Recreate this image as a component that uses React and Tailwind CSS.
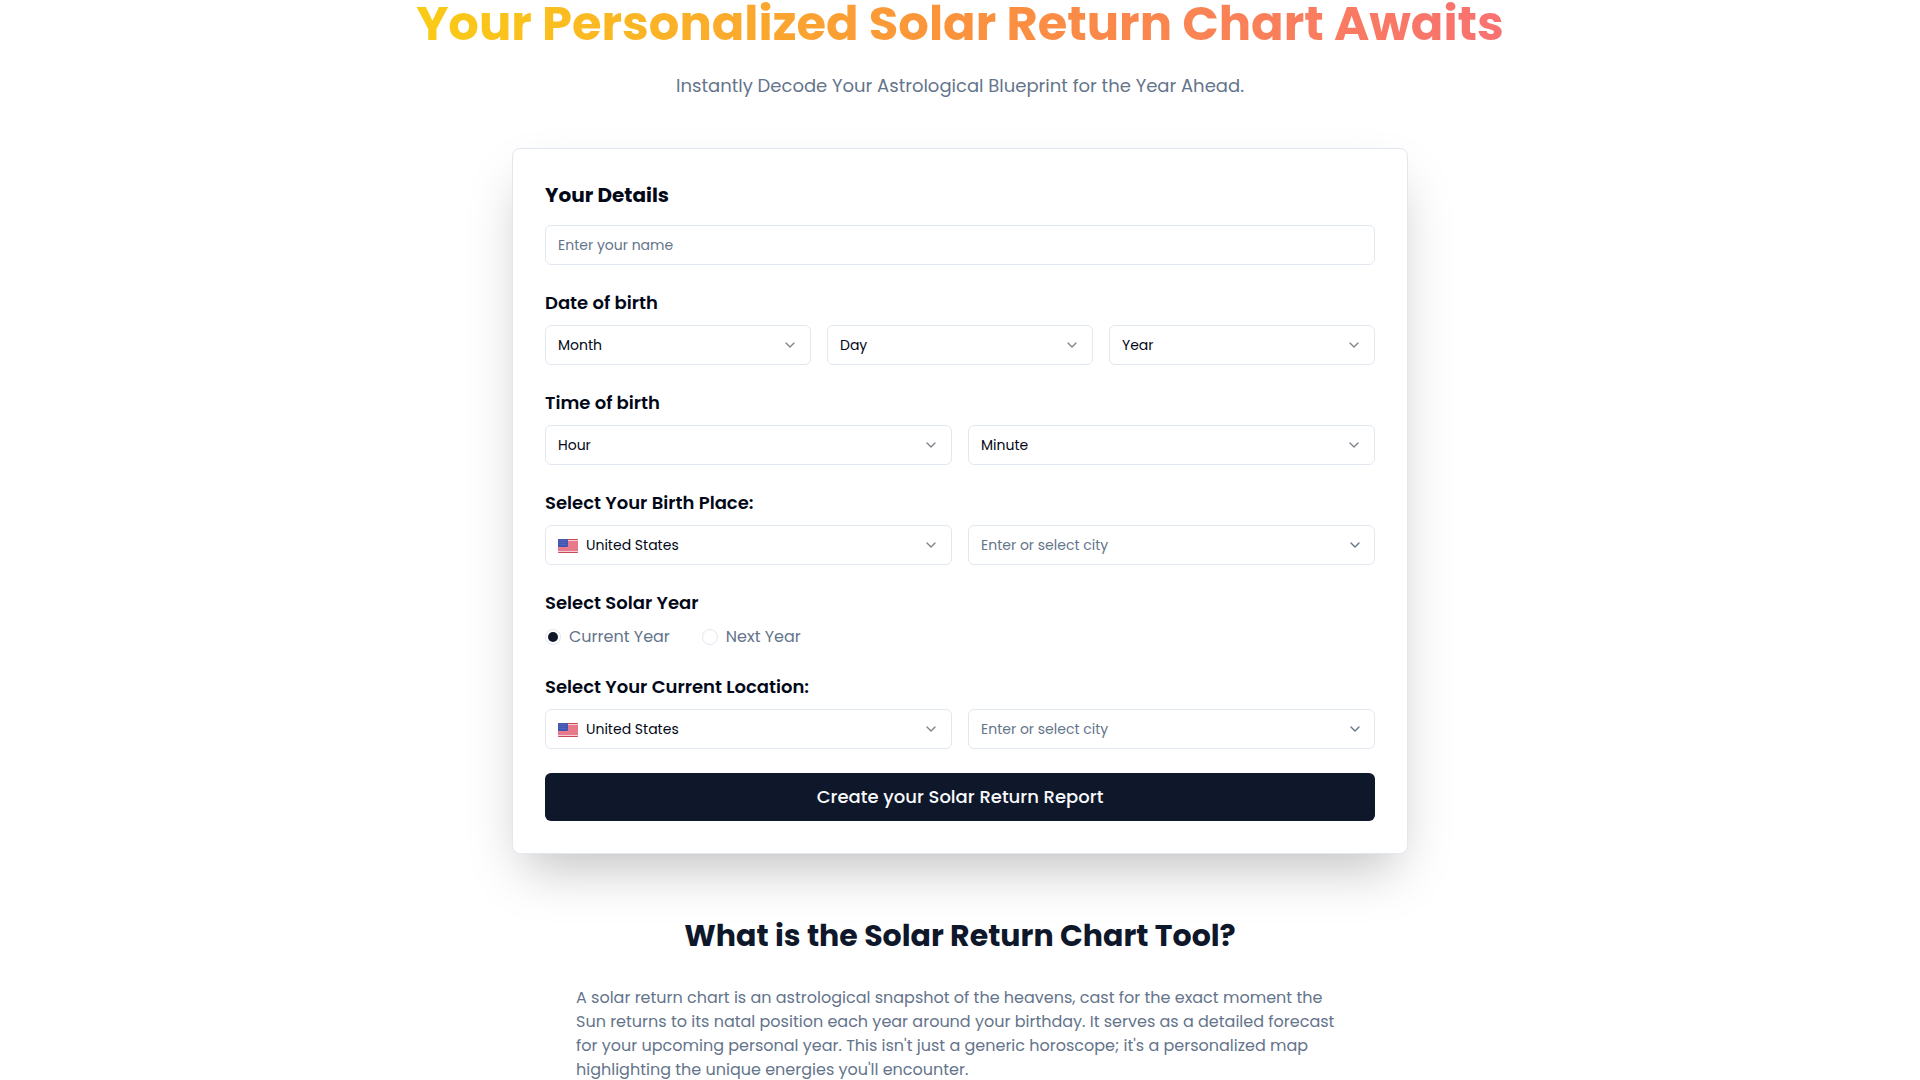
import React, { useState } from 'react';
import { ChevronDown } from 'lucide-react';

const MONTHS = [
  'January', 'February', 'March', 'April', 'May', 'June',
  'July', 'August', 'September', 'October', 'November', 'December',
];
const DAYS = Array.from({ length: 31 }, (_, i) => String(i + 1));
const YEARS = Array.from({ length: 100 }, (_, i) => String(2025 - i));
const HOURS = Array.from({ length: 24 }, (_, i) => String(i).padStart(2, '0'));
const MINUTES = Array.from({ length: 60 }, (_, i) => String(i).padStart(2, '0'));
const COUNTRIES = ['United States', 'Canada', 'United Kingdom', 'Australia'];

function UsFlag({ className }) {
  return (
    <svg viewBox="0 0 20 14" className={className} aria-hidden="true">
      <rect width="20" height="14" rx="1" fill="#e8798c" />
      <path d="M0.5 0H19.5L20 1H0ZM0 13H20L19.5 14H0.5Z" fill="#c64a5f" />
      <path d="M10 1.5H20M0 12.5H20" stroke="#f6cdd3" />
      <rect width="10" height="8" rx="1" fill="#3f55b0" />
      <path
        d="M2 1V7M4 1V7M6 1V7M8 1V7"
        stroke="#7183cb"
        strokeWidth="0.7"
        strokeDasharray="1 1"
      />
    </svg>
  );
}

function SelectField({ label, placeholder, options }) {
  const [value, setValue] = useState('');

  return (
    <div className="relative">
      <select
        aria-label={label}
        value={value}
        onChange={(e) => setValue(e.target.value)}
        className="block h-10 w-full appearance-none rounded-md border border-slate-200 bg-white px-3 text-sm text-[#020817]"
      >
        <option value="">{placeholder}</option>
        {options.map((option) => (
          <option key={option} value={option}>{option}</option>
        ))}
      </select>
      <ChevronDown className="pointer-events-none absolute top-3 right-[13px] h-4 w-4 text-[#020817] opacity-50" />
    </div>
  );
}

function PlaceFields({ name }) {
  const [country, setCountry] = useState('United States');
  const [city, setCity] = useState('');

  return (
    <div className="grid grid-cols-2 gap-4">
      <div className="relative">
        {country === 'United States' && (
          <UsFlag className="pointer-events-none absolute top-3.5 left-[13px] h-3.5 w-5" />
        )}
        <select
          aria-label={`${name} country`}
          value={country}
          onChange={(e) => setCountry(e.target.value)}
          className="block h-10 w-full appearance-none rounded-md border border-slate-200 bg-white pr-3 pl-10 text-sm text-[#020817]"
        >
          {COUNTRIES.map((option) => (
            <option key={option} value={option}>{option}</option>
          ))}
        </select>
        <ChevronDown className="pointer-events-none absolute top-3 right-[13px] h-4 w-4 text-[#020817] opacity-50" />
      </div>
      <div className="relative">
        <input
          type="text"
          aria-label={`${name} city`}
          placeholder="Enter or select city"
          value={city}
          onChange={(e) => setCity(e.target.value)}
          className="block h-10 w-full rounded-md border border-slate-200 bg-white pr-10 pl-3 text-sm text-[#020817] placeholder:text-[#64748b]"
        />
        <ChevronDown className="pointer-events-none absolute top-3 right-3 h-4 w-4 text-[#64748b]" />
      </div>
    </div>
  );
}

function Section({ title, children }) {
  return (
    <fieldset>
      <legend className="mb-2 text-lg font-semibold">{title}</legend>
      {children}
    </fieldset>
  );
}

function YearOption({ value, label, selected, onSelect }) {
  return (
    <label className="flex items-center gap-2 text-[#64748b]">
      <input
        type="radio"
        name="solarYear"
        value={value}
        checked={selected === value}
        onChange={() => onSelect(value)}
        className="h-4 w-4 appearance-none rounded-full border border-slate-200 bg-clip-content p-0.5 checked:bg-[#0f172a]"
      />
      {label}
    </label>
  );
}

function App() {
  const [name, setName] = useState('');
  const [solarYear, setSolarYear] = useState('current');

  return (
    <div className="min-h-screen bg-white font-[Poppins,Inter,sans-serif] text-[#020817]">
      {/* Hero */}
      <header className="flex flex-col items-center text-center">
        <h1 className="bg-linear-to-r/srgb from-[#facc15] via-[#fb923c] to-[#f87171] bg-clip-text text-5xl leading-none font-bold text-transparent">
          Your Personalized Solar Return Chart Awaits
        </h1>
        <p className="mt-6 text-lg text-[#64748b]">
          Instantly Decode Your Astrological Blueprint for the Year Ahead.
        </p>
      </header>

      <main className="mx-auto mt-12 max-w-4xl">
        {/* Form card */}
        <form
          onSubmit={(e) => e.preventDefault()}
          className="space-y-6 rounded-lg border border-slate-200 bg-white p-8 shadow-2xl"
        >
          <div>
            <label htmlFor="name" className="mb-4 block text-xl font-bold">
              Your Details
            </label>
            <input
              id="name"
              type="text"
              placeholder="Enter your name"
              value={name}
              onChange={(e) => setName(e.target.value)}
              className="block h-10 w-full rounded-md border border-slate-200 bg-white px-3 text-sm placeholder:text-[#64748b]"
            />
          </div>

          <Section title="Date of birth">
            <div className="grid grid-cols-3 gap-4">
              <SelectField label="Birth month" placeholder="Month" options={MONTHS} />
              <SelectField label="Birth day" placeholder="Day" options={DAYS} />
              <SelectField label="Birth year" placeholder="Year" options={YEARS} />
            </div>
          </Section>

          <Section title="Time of birth">
            <div className="grid grid-cols-2 gap-4">
              <SelectField label="Birth hour" placeholder="Hour" options={HOURS} />
              <SelectField label="Birth minute" placeholder="Minute" options={MINUTES} />
            </div>
          </Section>

          <Section title="Select Your Birth Place:">
            <PlaceFields name="Birth" />
          </Section>

          <Section title="Select Solar Year">
            <div className="flex gap-8">
              <YearOption value="current" label="Current Year" selected={solarYear} onSelect={setSolarYear} />
              <YearOption value="next" label="Next Year" selected={solarYear} onSelect={setSolarYear} />
            </div>
          </Section>

          <Section title="Select Your Current Location:">
            <PlaceFields name="Current" />
          </Section>

          <button
            type="submit"
            className="block h-12 w-full rounded-md bg-[#0f172a] text-lg font-medium text-slate-50 hover:bg-[#0f172a]/90"
          >
            Create your Solar Return Report
          </button>
        </form>

        {/* About the tool */}
        <section className="mx-auto mt-16 max-w-3xl">
          <h2 className="mb-8 text-center text-3xl font-bold text-[#0f172a]">
            What is the Solar Return Chart Tool?
          </h2>
          <p className="text-[#64748b]">
            A solar return chart is an astrological snapshot of the heavens, cast for the exact moment the
            Sun returns to its natal position each year around your birthday. It serves as a detailed forecast
            for your upcoming personal year. This isn't just a generic horoscope; it's a personalized map
            highlighting the unique energies you'll encounter.
          </p>
        </section>
      </main>
    </div>
  );
}

export default App;
